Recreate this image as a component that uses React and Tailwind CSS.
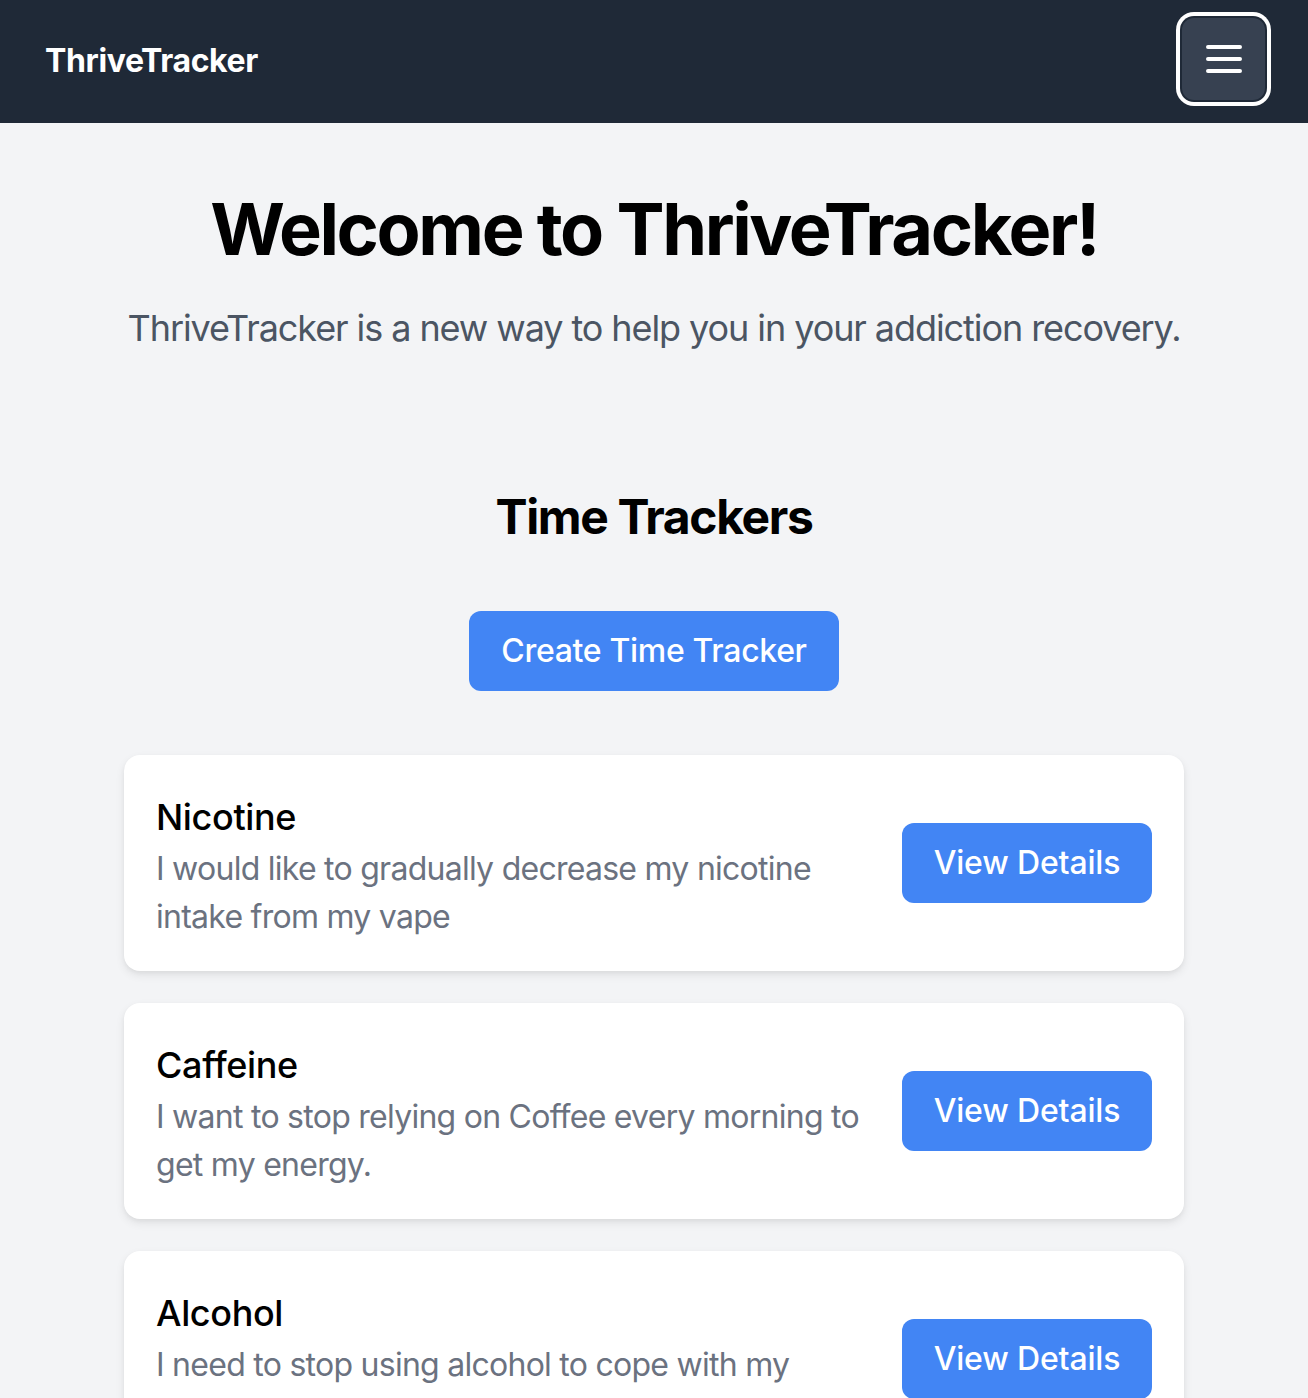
const trackers = [
  { name: 'Nicotine', desc: 'I would like to gradually decrease my nicotine intake from my vape' },
  { name: 'Caffeine', desc: 'I want to stop relying on Coffee every morning to get my energy.' },
  { name: 'Alcohol', desc: 'I need to stop using alcohol to cope with my stress and anxiety.' },
]

function TrackerCard({ name, desc }) {
  return (
    <div className="bg-white rounded-[16px] shadow-[0_4px_10px_rgba(0,0,0,0.08),0_2px_4px_rgba(0,0,0,0.04)] px-8 pt-[34px] pb-[30px] flex items-center gap-8">
      <div className="flex-1">
        <h3 className="text-[36px] leading-[56px] font-medium text-black tracking-[-0.01em]">{name}</h3>
        <p className="text-[32px] leading-[48px] text-[#6b7280] tracking-[-0.023em]">{desc}</p>
      </div>
      <button className="bg-[#4285f4] text-white text-[32px] font-medium w-[250px] h-[80px] rounded-[12px] shrink-0 -mt-1 tracking-[-0.005em]">
        View Details
      </button>
    </div>
  )
}

export default function App() {
  return (
    <div className="min-h-screen bg-[#f3f4f6] font-['Inter',sans-serif]">
      <header className="h-[123px] bg-[#1f2937] flex items-center justify-between pl-[45px] pr-[43px]">
        <span className="text-white text-[32px] font-bold tracking-[-0.012em] -mt-[2px]">ThriveTracker</span>
        <button className="w-[83px] h-[82px] -mt-[5px] rounded-[12px] bg-[#374151] flex items-center justify-center ring-4 ring-white ring-offset-2 ring-offset-[#1f2937]">
          <svg width="36" height="30" viewBox="0 0 36 30">
            <path d="M2 3h32M2 15h32M2 27h32" stroke="white" strokeWidth="4" strokeLinecap="round" />
          </svg>
        </button>
      </header>

      <main className="pt-[66px] pb-16">
        <h1 className="text-center text-[72px] leading-[80px] font-bold text-black tracking-[-0.033em]">Welcome to ThriveTracker!</h1>
        <p className="text-center text-[36px] leading-[56px] text-[#4b5563] mt-[31px] tracking-[-0.03em]">
          ThriveTracker is a new way to help you in your addiction recovery.
        </p>

        <h2 className="text-center text-[48px] leading-[64px] font-bold text-black mt-[129px] tracking-[-0.029em]">Time Trackers</h2>
        <div className="flex justify-center mt-[62px]">
          <button className="bg-[#4285f4] text-white text-[32px] font-medium w-[370px] h-[80px] rounded-[12px] tracking-[-0.01em]">
            Create Time Tracker
          </button>
        </div>

        <div className="w-[1060px] mx-auto mt-[64px] flex flex-col gap-8">
          {trackers.map((t) => (
            <TrackerCard key={t.name} {...t} />
          ))}
        </div>
      </main>
    </div>
  )
}
